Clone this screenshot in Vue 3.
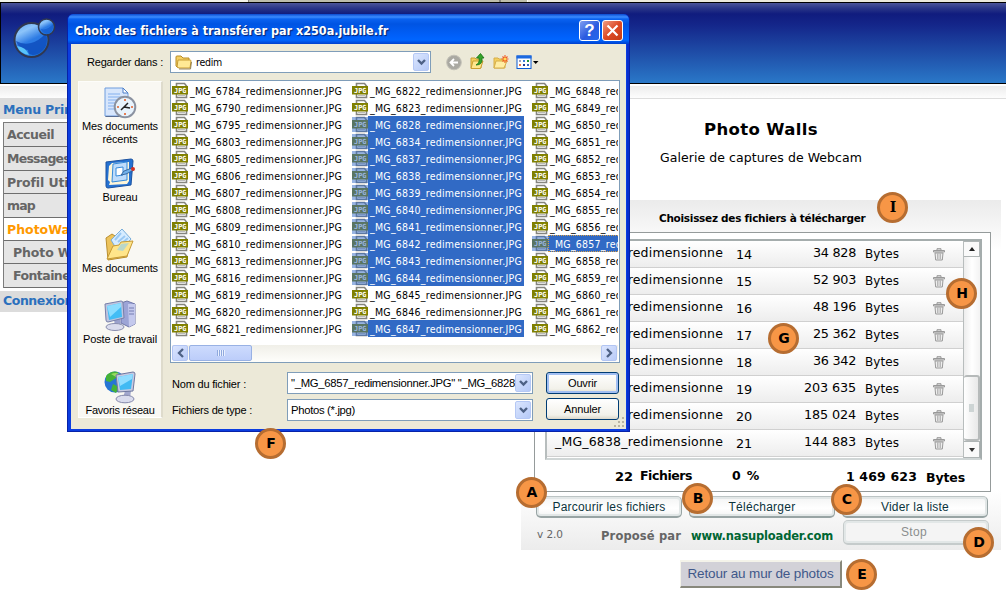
<script setup>
// Tracks a label out (or in) so that it fills the given width in pixels.
const vFit = {
  mounted(el, { value }) {
    if (!value) return
    const natural = el.getBoundingClientRect().width
    const count = el.textContent.length
    el.style.letterSpacing = (value - natural) / count + 'px'
  },
}

const menu = [
  { label: 'Accueil', w: 47, h: 24 },
  { label: 'Messages', w: 63, h: 24 },
  { label: 'Profil Utilisateur', w: 114, h: 23 },
  { label: 'map', w: 28, h: 24 },
  { label: 'PhotoWalls', w: 79, h: 23, active: true },
  { label: 'Photo Walls', w: 82, h: 23, sub: true },
  { label: 'Fontaines', w: 64, h: 24, sub: true },
]

const selected = [6828, 6834, 6837, 6838, 6839, 6840, 6841, 6842, 6843, 6844, 6847, 6857]
const columns = [
  [6784, 6790, 6795, 6803, 6805, 6806, 6807, 6808, 6809, 6810, 6813, 6816, 6819, 6820, 6821],
  [6822, 6823, 6828, 6834, 6837, 6838, 6839, 6840, 6841, 6842, 6843, 6844, 6845, 6846, 6847],
  [6848, 6849, 6850, 6851, 6852, 6853, 6854, 6855, 6856, 6857, 6858, 6859, 6860, 6861, 6862],
]

const uploads = [
  { id: 6844, n: 14, size: '34 828', w: 43 },
  { id: 6843, n: 15, size: '52 903', w: 43 },
  { id: 6842, n: 16, size: '48 196', w: 43 },
  { id: 6841, n: 17, size: '25 362', w: 43 },
  { id: 6840, n: 18, size: '36 342', w: 43 },
  { id: 6839, n: 19, size: '203 635', w: 52 },
  { id: 6837, n: 20, size: '185 024', w: 52 },
  { id: 6838, n: 21, size: '144 883', w: 52 },
]

const badges = ['A', 'B', 'C', 'D', 'E', 'F', 'G', 'H', 'I']
</script>

<template>
  <div class="page">
    <div class="tabs"><i class="t1"></i><i class="t2"></i><i class="t3"></i><i class="t4"></i></div>
    <header class="banner">
      <svg class="logo" width="46" height="46" viewBox="0 0 46 46">
        <defs>
          <linearGradient id="ball" x1="0" y1="0" x2="0.5" y2="1">
            <stop offset="0" stop-color="#5ea8f4" /><stop offset=".3" stop-color="#8cc4fa" />
            <stop offset=".6" stop-color="#2d7be4" /><stop offset="1" stop-color="#1f78e0" />
          </linearGradient>
        </defs>
        <circle cx="20.500" cy="26" r="17" fill="url(#ball)" stroke="#303850" stroke-width="2" />
        <path d="M5 27Q12 31 20 29T35 19Q39 34 27 40Q17 43 17 36Q8 36 5 27Z" fill="#0c48b8" opacity=".75" />
        <path d="M6 32Q15 33 18 41Q9 40 6 32Z" fill="#58c4fa" />
        <circle cx="35.500" cy="13" r="8" fill="url(#ball)" stroke="#303850" stroke-width="1.5" />
        <path d="M30 15Q36 17 42 10Q43 19 36 20Q31 19 30 15Z" fill="#1155cc" opacity=".6" />
      </svg>
    </header>
    <div class="shade"></div>

    <main class="body">
      <nav class="side">
        <h3 class="head"><span v-fit="102">Menu Principal</span></h3>
        <ul>
          <li v-for="m in menu" :key="m.label" :class="{ active: m.active, sub: m.sub }" :style="{ height: m.h + 'px' }">
            <span v-fit="m.w">{{ m.label }}</span>
          </li>
        </ul>
        <h3 class="head second"><span v-fit="70">Connexion</span></h3>
      </nav>

      <section class="content">
        <h1><span v-fit="114">Photo Walls</span></h1>
        <p class="lead"><span v-fit="202">Galerie de captures de Webcam</span></p>

        <div class="uploader">
          <h2><span v-fit="206">Choisissez des fichiers à télécharger</span></h2>
          <div class="box">
            <div class="grid">
              <div class="rows">
                <div v-for="u in uploads" :key="u.n" class="row">
                  <div class="name"><span v-fit="168">_MG_{{ u.id }}_redimensionne</span></div>
                  <div class="num"><span v-fit="16">{{ u.n }}</span></div>
                  <div class="size"><span v-fit="u.w">{{ u.size }}</span></div>
                  <div class="unit"><span v-fit="34">Bytes</span></div>
                  <svg class="trash" width="12" height="13" viewBox="0 0 12 13">
                    <path d="M.5 2.5H11.5V4H.5ZM4 2V.7H8V2" fill="#ddd" stroke="#999" />
                    <path d="M2 5H10L9.3 12H2.7Z" fill="#eee" stroke="#999" />
                    <path d="M4.5 5.5V11M6 5.5V11M7.5 5.5V11" stroke="#aaa" stroke-width=".8" />
                  </svg>
                </div>
              </div>
              <div class="vbar">
                <div class="vbtn"><svg width="6" height="4"><path d="M0 4L3 0L6 4Z" fill="#222" /></svg></div>
                <div class="vtrack"></div>
                <div class="vthumb"><i></i></div>
                <div class="vbtn down"><svg width="6" height="4"><path d="M0 0L3 4L6 0Z" fill="#333" /></svg></div>
              </div>
            </div>
            <div class="totals">
              <span class="a" v-fit="18">22</span><span class="b" v-fit="52">Fichiers</span>
              <span class="c" v-fit="28">0 %</span><span class="d" v-fit="71">1 469 623</span><span class="e" v-fit="39">Bytes</span>
            </div>
          </div>
          <div class="actions">
            <button><span v-fit="113">Parcourir les fichiers</span></button>
            <button><span v-fit="67">Télécharger</span></button>
            <button><span v-fit="68">Vider la liste</span></button>
          </div>
          <div class="foot">
            <span class="ver" v-fit="26">v 2.0</span>
            <span class="by" v-fit="80">Proposé par</span>
            <span class="link" v-fit="142">www.nasuploader.com</span>
            <button class="off"><span v-fit="26">Stop</span></button>
          </div>
        </div>
        <button class="back"><span v-fit="146">Retour au mur de photos</span></button>
      </section>
    </main>

    <div class="dialog">
      <div class="title">
        <span class="cap" v-fit="313">Choix des fichiers à transférer par x250a.jubile.fr</span>
        <div class="wb help">?</div>
        <div class="wb close"><svg width="13" height="13"><path d="M1.5 1.5L11.5 11.5M11.5 1.5L1.5 11.5" stroke="#fff" stroke-width="2.2" /></svg></div>
      </div>
      <div class="client">
        <div class="lookin">
          <div class="lbl"><span v-fit="76">Regarder dans :</span></div>
          <div class="combo">
            <svg width="17" height="15" viewBox="0 0 17 15">
              <path d="M1 11V2Q1 1 2 1H6L8 3H14V12H2Z" fill="#f4cf63" stroke="#b78b24" />
              <path d="M3 5H15Q16 5 16 6L15 13H4L2 12Z" fill="#ffe995" stroke="#c79b32" />
              <path d="M4 14H15.5L16.5 7" fill="none" stroke="#806a3a" stroke-width=".8" />
            </svg>
            <span class="tah" v-fit="26">redim</span>
            <div class="drop"><svg width="9" height="7"><path d="M1 1L4.5 4.5L8 1" fill="none" stroke="#4d6185" stroke-width="2.4" /></svg></div>
          </div>
          <svg class="tools" width="96" height="20" viewBox="0 0 96 20">
            <circle cx="8" cy="11.500" r="7.3" fill="#aaa9a2" stroke="#c3c1b7" />
            <path d="M12 11.500H5M8 8L4.5 11.500L8 15" fill="none" stroke="#fff" stroke-width="1.8" />
            <path d="M25 7H29L30 8H35V17H25Z" fill="#f4cf5d" stroke="#c99e30" />
            <path d="M27 10H37L34.500 17.500H25Z" fill="#ffe68c" stroke="#c99e30" />
            <path d="M30 14Q34 12 33 7H30.500L34.500 2.500L38 7H36Q37 14 30 14Z" fill="#35a32b" stroke="#177314" stroke-width=".8" />
            <path d="M48 7H52L53 8H59V17H48Z" fill="#f4cf5d" stroke="#d6ae4a" />
            <path d="M50 10H61L58 17H48Z" fill="#ffeda2" stroke="#d6ae4a" />
            <path d="M59 4V12M55.500 8H62.500M56.500 5.500L61.500 10.500M61.500 5.500L56.500 10.500" stroke="#f05a22" stroke-width="1.1" />
            <circle cx="59" cy="8" r="1.5" fill="#ffdd55" />
            <rect x="71" y="5" width="14" height="12.500" fill="#fff" stroke="#0a5ad4" />
            <rect x="70.500" y="4.500" width="15" height="3" fill="#1c69e0" />
            <path d="M73 9h2v2h-2z" fill="#98a0c0" /><path d="M77 9h2v2h-2z" fill="#3a7ad8" /><path d="M81 9h2v2h-2z" fill="#20953c" />
            <path d="M73 13h2v2h-2z" fill="#f17845" /><path d="M77 13h2v2h-2z" fill="#203a90" /><path d="M81 13h2v2h-2z" fill="#3d64b8" />
            <path d="M87 10H92.500L89.700 13Z" fill="#000" />
          </svg>
        </div>

        <div class="middle">
          <div class="places">
            <div class="place">
              <svg width="34" height="34" viewBox="0 0 34 34">
                <path d="M2 2H20L25 7V30H2Z" fill="#d7e6fc" stroke="#6f9ddd" /><path d="M20 2V7H25Z" fill="#fff" stroke="#4d7fc9" />
                <path d="M5 8H17M5 11H20M5 14H14M5 17H12M5 20H11M5 23H11" stroke="#83b0ef" />
                <path d="M2.500 30.500H24" stroke="#596d92" />
                <circle cx="22" cy="21" r="10.300" fill="#e8f3fc" stroke="#8b92a0" stroke-width="2" />
                <path d="M21 21L25 17M21 21L27 22M21 21L18 24" stroke="#222" stroke-width="1.5" />
                <path d="M22 13V15M22 27V29M14 21H16M28 21H30" stroke="#e4602a" stroke-width="1.6" />
              </svg>
              <div><span v-fit="76">Mes documents</span></div>
              <div><span v-fit="35">récents</span></div>
            </div>
            <div class="place">
              <svg width="34" height="34" viewBox="0 0 34 34">
                <path d="M3 5L28 2Q30 2 30 4L28 28L5 31Q3 31 3 29Z" fill="#2572d2" stroke="#1c529f" />
                <path d="M6 9L9 6L26 5V24L24 27L6 28L7 25L5 23Z" fill="#fff6d8" />
                <path d="M10 7L24 5V23L9 25Z" fill="#bedcfb" stroke="#358ad9" />
                <path d="M13 11L20 10V18L13 19Z" fill="#fff" stroke="#358ad9" />
                <path d="M18 18L21 14L29 11L31 13L23 17Z" fill="#72b1ea" stroke="#24558e" stroke-width=".8" />
                <circle cx="30" cy="12" r="2" fill="#d83220" />
              </svg>
              <div><span v-fit="35">Bureau</span></div>
            </div>
            <div class="place">
              <svg width="34" height="34" viewBox="0 0 34 34">
                <path d="M3 10L9 6L12 8L27 13L24 29L5 32Z" fill="#edc35b" stroke="#b98e2e" />
                <path d="M8 12L19 1L28 11L16 25Z" fill="#d6ecff" stroke="#78add9" />
                <path d="M12 12L18 5M15 14L22 8M18 16L25 10" stroke="#9ac9f4" stroke-width="2" />
                <path d="M4 31L10 18L16 17L18 14L30 13L24 28Z" fill="#ffe58a" stroke="#c69a35" />
                <path d="M14 22L20 23L26 15L18 16Z" fill="#9dd2e3" opacity=".7" />
              </svg>
              <div><span v-fit="76">Mes documents</span></div>
            </div>
            <div class="place">
              <svg width="34" height="34" viewBox="0 0 34 34">
                <path d="M18 4L24 2L32 5V25L26 28L18 24Z" fill="#9ca4d6" stroke="#6e75a7" />
                <path d="M25 5L32 5V25L26 28Z" fill="#c4c9ed" /><path d="M26 9H31M26 12H31M26 15H31" stroke="#757db1" />
                <path d="M11 20H17L18 26L12 28Z" fill="#9ba1cc" /><ellipse cx="12" cy="28" rx="9" ry="3.500" fill="#dadced" stroke="#898eae" />
                <path d="M2 5L18 2Q20 2 20 4L21 19L5 23Q3 23 3 21Z" fill="#bfc5df" stroke="#777fa9" />
                <path d="M4 7L18 4L19 18L6 21Z" fill="#43bdf5" /><path d="M4 7L18 4L18 8L7 18Z" fill="#8cddff" />
              </svg>
              <div><span v-fit="74">Poste de travail</span></div>
            </div>
            <div class="place">
              <svg width="34" height="34" viewBox="0 0 34 34">
                <circle cx="12" cy="12" r="10.500" fill="#2675d4" /><path d="M3 6Q8 0 15 2L13 8L7 12L3 11ZM10 14L16 17L13 23L8 20Z" fill="#45b238" />
                <path d="M8 4Q13 2 17 4L13 7Z" fill="#98db62" />
                <path d="M22 21H28L27 28H20Z" fill="#a2a7cd" /><ellipse cx="22" cy="29" rx="9" ry="3.800" fill="#dadced" stroke="#8589ab" />
                <path d="M13 5L30 2Q32 2 32 4L30 21L15 22Z" fill="#c6cae2" stroke="#70789f" />
                <path d="M15 7L30 4L28 19L17 20Z" fill="#40baf3" /><path d="M15 7L30 4L29 9L17 16Z" fill="#90ddff" />
              </svg>
              <div><span v-fit="69">Favoris réseau</span></div>
            </div>
          </div>

          <div class="files">
            <div class="cols">
              <div v-for="(c, i) in columns" :key="i" class="col">
                <div v-for="f in c" :key="f" class="file" :class="{ sel: selected.includes(f), focus: f === 6857 }">
                  <svg width="16" height="17" viewBox="0 0 16 17">
                    <path d="M4.500 1.500H12.500L14.500 4V15.500H4.500Z" fill="#fff" stroke="#85857f" stroke-width="1.6" />
                    <path d="M6 13.500H13" stroke="#bbb" />
                    <rect x="0" y="4" width="16" height="8.500" fill="#808000" />
                    <text x="2" y="10.800" textLength="12.500" lengthAdjust="spacingAndGlyphs" font-family="DejaVu Sans Mono" font-weight="bold" font-size="7" fill="#fff">JPG</text>
                    <rect v-if="selected.includes(f)" x="0" y="1" width="16" height="15" fill="#316ac5" opacity=".5" />
                  </svg>
                  <div class="fname"><span v-fit="152">_MG_{{ f }}_redimensionner.JPG</span></div>
                </div>
              </div>
            </div>
            <div class="hbar">
              <div class="hb"><svg width="7" height="10"><path d="M6 1L2 5L6 9" fill="none" stroke="#4d6185" stroke-width="2.3" /></svg></div>
              <div class="hthumb"><i></i><i></i><i></i><i></i></div>
              <div class="hb end"><svg width="7" height="10"><path d="M1 1L5 5L1 9" fill="none" stroke="#4d6185" stroke-width="2.3" /></svg></div>
            </div>
          </div>
        </div>

        <div class="form">
          <div class="lbl2"><span v-fit="74">Nom du fichier :</span></div>
          <div class="combo">
            <div class="val"><span v-fit="224">"_MG_6857_redimensionner.JPG" "_MG_6828</span></div>
            <div class="drop"><svg width="9" height="7"><path d="M1 1L4.500 4.500L8 1" fill="none" stroke="#4d6185" stroke-width="2.400" /></svg></div>
          </div>
          <button class="xp def"><span v-fit="29">Ouvrir</span></button>
          <div class="lbl2 up"><span v-fit="80">Fichiers de type :</span></div>
          <div class="combo">
            <div class="val"><span v-fit="64">Photos (*.jpg)</span></div>
            <div class="drop"><svg width="9" height="7"><path d="M1 1L4.500 4.500L8 1" fill="none" stroke="#4d6185" stroke-width="2.400" /></svg></div>
          </div>
          <button class="xp second"><span v-fit="37">Annuler</span></button>
        </div>
        <svg class="grip" width="12" height="12">
          <path d="M9 1h2v2h-2zM5 5h2v2h-2zM9 5h2v2h-2zM1 9h2v2h-2zM5 9h2v2h-2zM9 9h2v2h-2z" fill="#b8b4a2" />
        </svg>
      </div>
    </div>

    <div v-for="b in badges" :key="b" class="badge" :class="'at-' + b">{{ b }}</div>
  </div>
</template>

<style>
html, body { overflow: hidden; background: #fff; }
</style>

<style scoped>
* { box-sizing: border-box; }
h1, h2, h3, p, ul { margin: 0; padding: 0; list-style: none; }
span { display: inline-block; white-space: pre; }
svg { display: block; flex: none; }
button { margin: 0; padding: 0; font: inherit; }
.page { position: relative; width: 1006px; height: 597px; overflow: hidden; background: #fff; font-family: "DejaVu Sans", Verdana, sans-serif; color: #000; }
.tabs { display: flex; height: 2px; background: #eceadb; }
.t1 { width: 249px; background: #f3f4ea; border-right: 1px solid #85857c; }
.t2 { width: 252px; background: #bdbdab; border-right: 2px solid #85857c; }
.t3 { width: 26px; background: #bdbdab; }
.t4 { width: 1px; background: #fff; }
.banner { height: 82px; border: solid #000; border-width: 1px 0 1px 1px; background: linear-gradient(#4b5599 0, #2b3788 5px, #101c7e 11px, #14268a 22px, #2a78c8 100%); padding: 11px 0 0 10px; }
.shade { height: 15px; border-top: 2px solid #fff; border-bottom: 1px solid #ddd; background: linear-gradient(#ececec, #fdfdfd); }
.body { display: flex; height: 498px; margin-top: -1px; }
.side { width: 330px; flex: none; }
.head { height: 21px; background: #dcdcdc; color: #2b70bd; font: bold 12.5px/23px "DejaVu Sans", sans-serif; padding-left: 3px; }
.head span { vertical-align: top; }
.head.second { line-height: 20px; }
.side ul { margin: 3px 0 3px 3px; border: solid #7c7c7c; border-width: 1px 0 0 1px; width: 200px; }
.side li { background: #e5e5e5; border-bottom: 1px solid #6e6e6e; padding-left: 3px; font: bold 12.5px/24px "DejaVu Sans", sans-serif; color: #666; }
.side li span { vertical-align: top; }
.side li.active { background: #fff; color: #f90; }
.side li.sub { padding-left: 9px; }
.content { width: 480px; margin-left: 191px; display: flex; flex-direction: column; align-items: center; }
.content h1 { font: bold 16.5px/20px "DejaVu Sans", sans-serif; margin-top: 22px; }
.lead { font-size: 12.5px; line-height: 18px; margin-top: 9px; height: 18px; }
.uploader { margin-top: 33px; width: 480px; height: 350px; background: linear-gradient(#ebebeb, #fff 50px, #fff 290px, #ececec); }
.uploader h2 { font: bold 10.5px/16px "DejaVu Sans", sans-serif; padding: 10px 0 0 138px; height: 32px; }
.box { width: 457px; height: 260px; margin-left: 13px; border: 1px solid #959b9b; background: #fff; padding: 6px 0 0 10px; }
.grid { width: 437px; height: 221px; display: flex; border: 2px solid #a5adad; border-left-color: #b7bdbd; border-bottom-color: #d0d6d6; }
.rows { flex: 1; overflow: hidden; }
.row { display: flex; height: 27px; border-bottom: 1px solid #d0d0d0; background: linear-gradient(#fff, #ededed); font-size: 12.8px; line-height: 16px; padding-left: 8px; }
.row span { vertical-align: top; }
.name { width: 181px; padding-top: 4px; font-size: 12.5px; }
.num { width: 40px; padding-top: 6px; }
.size { width: 81px; padding-top: 4px; text-align: right; margin-left: -1px; }
.unit { width: 68px; margin-left: 9px; padding-top: 5px; font-size: 12px; }
.trash { margin-top: 7px; }
.vbar { width: 17px; border-left: 1px solid #b8bdbd; background: linear-gradient(90deg, #ededed, #fff 50%, #f3f3f3); display: flex; flex-direction: column; }
.vbtn { height: 16px; border: 1px solid #afb5b5; border-left: 0; background: #fafafa; display: flex; align-items: center; justify-content: center; }
.vtrack { height: 118px; }
.vthumb { height: 66px; border: 2px solid #b6baba; border-left: 0; border-radius: 3px; background: linear-gradient(90deg, #fff, #e8e8e8); display: flex; align-items: center; justify-content: center; }
.vthumb i { width: 5px; height: 8px; background: #cdd4d4; }
.vbtn.down { flex: 1; }
.totals { display: flex; height: 31px; font: bold 12.5px/16px "DejaVu Sans", sans-serif; padding-top: 8px; }
.a { margin-left: 70px; padding-top: 1px; font-size: 13px; }
.b { margin-left: 7px; }
.c { margin-left: 40px; }
.d { margin-left: 86px; padding-top: 1px; }
.e { margin-left: 9px; padding-top: 2px; }
.actions { display: flex; gap: 7px; padding: 4px 0 0 15px; }
.actions button, .off { width: 146px; height: 22px; border: 1px solid #98a4a4; border-bottom-width: 2px; border-radius: 5px; background: linear-gradient(#f3f4f4, #fff 60%, #f2f3f3); box-shadow: inset 0 0 0 2px #e2e7e7; font: 12px/16px "Liberation Sans", Arial, sans-serif; color: #0b333c; border-top-color: #bcc4c4; }
.foot { display: flex; height: 32px; padding-left: 16px; color: #666; }
.ver { font-size: 10.5px; line-height: 14px; margin-top: 9px; }
.by { font-size: 11.5px; font-weight: bold; line-height: 14px; margin: 11px 0 0 38px; }
.link { font-size: 11.5px; font-weight: bold; line-height: 14px; margin: 11px 0 0 10px; color: #063; }
.off { height: 25px; margin: 2px 0 0 10px; color: #8b8e8e; border-color: #c5cbcb; background: #f4f4f4; }
.off span { position: relative; left: -2px; }
.back { width: 162px; height: 28px; margin-top: 10px; border: solid; border-width: 2px 2px 2px 1px; border-color: #f4f3ea #88887c #88887c #f4f3ea; background: #d2d1d8; color: #40588a; font: 13.5px/18px "Liberation Sans", Arial, sans-serif; }

.dialog { position: absolute; left: 67px; top: 14px; width: 563px; height: 418px; background: #0b3de0; border-radius: 6px 6px 0 0; border: 1px solid #0722a8; border-width: 0 1px 1px 1px; padding: 0 3px; box-shadow: inset -2px 0 #0a2fce; }
.title { height: 30px; margin: 0 -3px; border-radius: 6px 6px 0 0; background: linear-gradient(#0a4bd0 0, #3c8cff 3px, #0a62f0 5px, #0054e3 10px, #0060fa 22px, #0066ff 26px, #003fcd 30px); display: flex; align-items: flex-start; padding: 6px 6px 0 7px; }
.cap { font: bold 12.5px/20px "DejaVu Sans Condensed", "DejaVu Sans", sans-serif; font-stretch: condensed; color: #fff; text-shadow: 1px 1px 1px #06206c; margin-top: 1px; }
.wb { width: 21px; height: 21px; border: 1px solid #fff; border-radius: 3px; display: flex; align-items: center; justify-content: center; }
.help { margin-left: auto; background: linear-gradient(135deg, #7f9df0, #2a5be0 55%, #2467ee); color: #fff; font: bold 17px/19px "Liberation Sans", sans-serif; }
.close { margin-left: 2px; background: linear-gradient(135deg, #f09d84, #dd4a26 50%, #c53c14); }
.client { position: relative; height: 385px; background: #ece9d8; padding: 7px 6px 0 7px; font: 11px/13px "Liberation Sans", Arial, sans-serif; }
.lookin { display: flex; height: 22px; }
.lbl { width: 92px; padding: 5px 0 0 9px; }
.combo { height: 22px; border: 1px solid #7f9db9; background: #fff; display: flex; align-items: center; padding: 0 1px 0 3px; }
.lookin .combo { width: 261px; padding-left: 4px; gap: 4px; }
.drop { width: 16px; height: 18px; flex: none; margin-left: auto; border: 1px solid #b5c8f5; border-radius: 2px; background: linear-gradient(135deg, #dbe6fe, #b5c9f7); display: flex; align-items: center; justify-content: center; padding-top: 1px; }
.tah, .fname { font-family: "DejaVu Sans Condensed", "DejaVu Sans", sans-serif; font-stretch: condensed; font-size: 10.5px; }
.form .combo { font-size: 11.3px; }
.tools { margin-left: 15px; }
.middle { display: flex; margin-top: 7px; height: 283px; }
.places { width: 85px; height: 337px; margin: 1px 7px 0 0; flex: none; background: #f9f8f3; border: solid; border-width: 1px 2px 1px 1px; border-color: #fdfdfa #dedbcc #fff #fdfdfa; text-align: center; padding-top: 4px; }
.place { height: 71px; line-height: 13px; }
.place:last-child { height: 47px; }
.place svg { margin: 0 auto; }
.place span { vertical-align: top; }
.files { width: 450px; height: 283px; border: 1px solid #7f9db9; background: #fff; padding: 1px; }
.cols { display: flex; width: 446px; height: 263px; overflow: hidden; }
.col { width: 180px; flex: none; }
.file { display: flex; height: 17px; }
.fname { width: 156px; line-height: 18px; padding-left: 2px; }
.fname span { vertical-align: top; }
.sel .fname { background: #316ac5; color: #fff; }
.focus .fname { outline: 1px dotted #d9a14a; outline-offset: -1px; }
.hbar { height: 17px; display: flex; background: linear-gradient(#f0efe8, #fefefb); padding: 0 1px 0 0; }
.hb { width: 16px; height: 16px; border: 1px solid #b2c5f3; border-radius: 2px; background: linear-gradient(135deg, #dbe5fe, #b9cbf8); display: flex; align-items: center; justify-content: center; }
.end { margin-left: auto; }
.hthumb { width: 63px; height: 16px; margin-left: 1px; border: 1px solid #98b1e4; border-radius: 2px; background: linear-gradient(#cddbfd, #bccdfa); display: flex; gap: 1px; align-items: center; justify-content: center; }
.hthumb i { width: 1px; height: 6px; background: #8fa9de; box-shadow: 1px 0 #eaf0ff; }
.form { display: grid; grid-template-columns: 115px 246px 86px; row-gap: 5px; margin: 9px 0 0 94px; }
.val { width: 226px; overflow: hidden; height: 16px; line-height: 16px; }
.val span { vertical-align: top; }
.lbl2 { padding-top: 6px; }
.lbl2.up { padding-top: 5px; }
.xp { margin-left: 13px; width: 73px; height: 22px; border: 1px solid #003c74; border-radius: 3px; background: linear-gradient(#fff, #f2f1ea 80%, #dcd8ca); line-height: 16px; color: #000; }
.xp.second { margin-top: -1px; }
.def { box-shadow: inset 0 0 0 2px #a2bff2; }
.grip { position: absolute; right: 1px; bottom: 1px; }

.badge { position: absolute; width: 31px; height: 31px; border-radius: 50%; background: #f79646; border: 3px solid #b66d31; font: bold 14px/25px "DejaVu Sans", sans-serif; text-align: center; padding-left: 1px; }
.at-A { left: 516px; top: 477px; }
.at-B { left: 682px; top: 483px; }
.at-C { left: 831px; top: 484px; }
.at-D { left: 963px; top: 527px; }
.at-E { left: 846px; top: 559px; }
.at-F { left: 255px; top: 428px; }
.at-G { left: 768px; top: 323px; }
.at-H { left: 946px; top: 278px; }
.at-I { left: 877px; top: 192px; font-family: "DejaVu Serif", serif; }
</style>
